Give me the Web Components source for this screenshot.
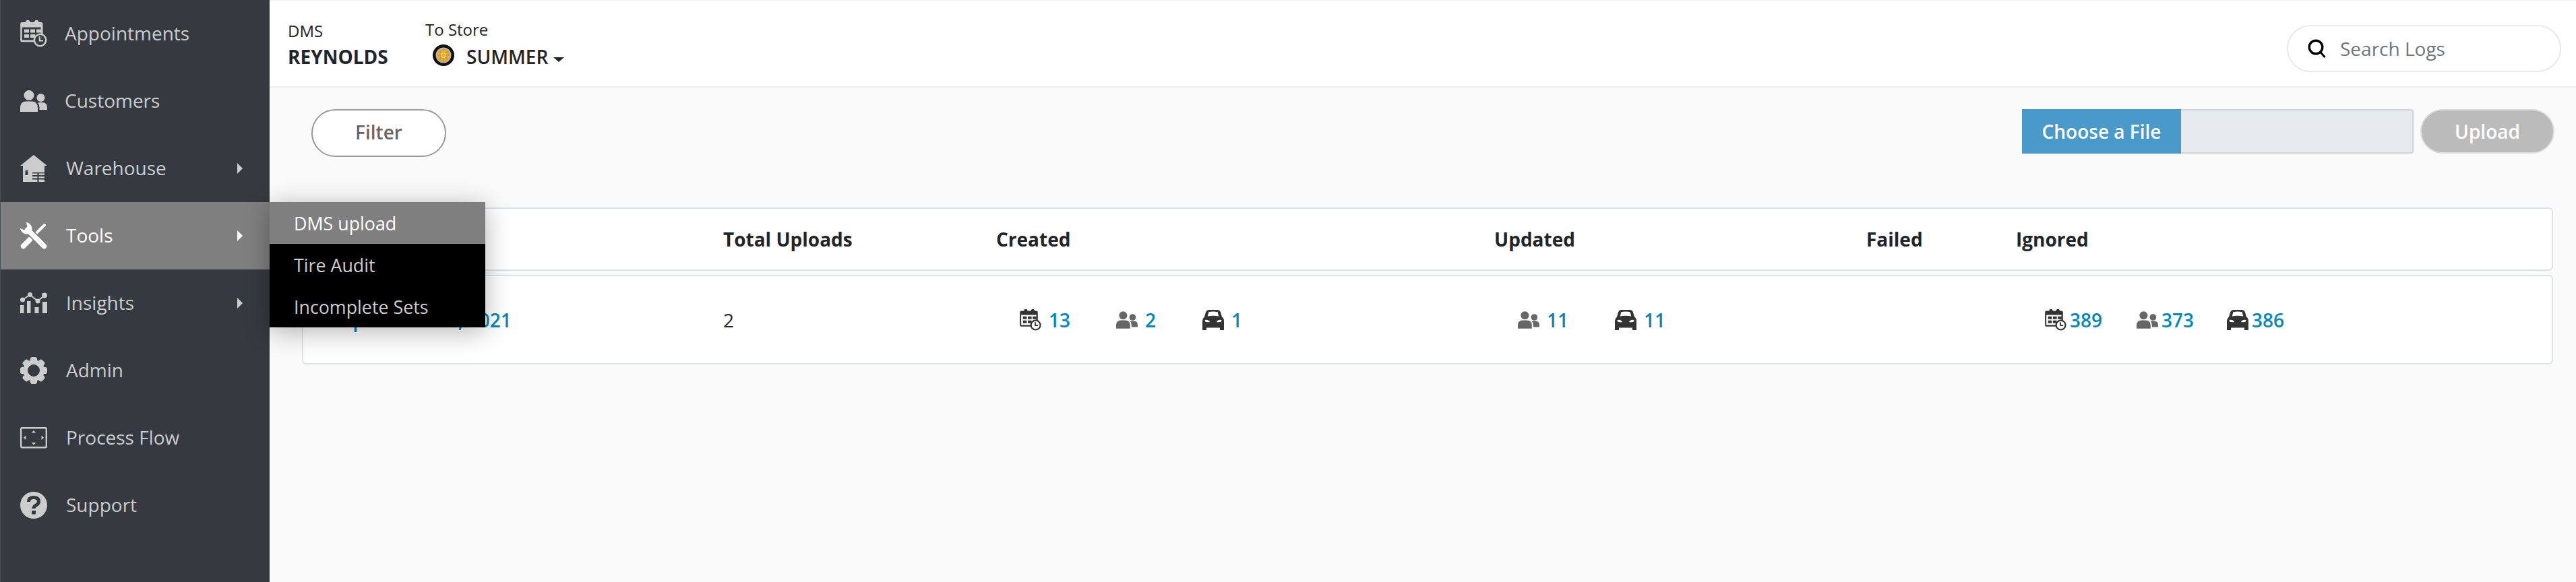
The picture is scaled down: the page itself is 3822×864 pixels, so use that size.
<!DOCTYPE html>
<html lang="en">
<head>
<meta charset="utf-8">
<title>DMS upload</title>
<style>
    html, body { margin: 0; height: 100%; background: #fafafa; }
    body { font-family: "Open Sans", "Liberation Sans", sans-serif; color: #212529; overflow: hidden; }
</style>
</head>
<body>
<app-shell>
    <side-nav slot="nav">
        <nav-item icon="calendar">Appointments</nav-item>
        <nav-item icon="people">Customers</nav-item>
        <nav-item icon="warehouse" arrow>Warehouse</nav-item>
        <nav-item icon="tools" arrow active>Tools</nav-item>
        <nav-item icon="insights" arrow>Insights</nav-item>
        <nav-item icon="gear">Admin</nav-item>
        <nav-item icon="flow">Process Flow</nav-item>
        <nav-item icon="help">Support</nav-item>
    </side-nav>
    <top-bar slot="top"></top-bar>
    <tool-bar></tool-bar>
    <log-table></log-table>
    <fly-menu slot="menu">
        <menu-link active>DMS upload</menu-link>
        <menu-link>Tire Audit</menu-link>
        <menu-link>Incomplete Sets</menu-link>
    </fly-menu>
</app-shell>

<script>
// Dibujos de los iconos, todos inline
const ICONOS = {
    calendar: `<svg viewBox="0 0 40 40"><path fill="currentColor" d="M3 3h5a3.2 3.2 0 0 1 6.500 0h6.500a3.200 3.200 0 0 1 6.500 0h3.500q2.500 0 2.500 2.500v19h-2.800v-14h-28v19h19.500v2.800h-19.500q-2.500 0-2.500-2.500v-24.300q0-2.500 2.500-2.500z"/><path fill="currentColor" d="M6 13.500h7v5h-7zM15 13.500h7v5h-7zM24 13.500h7v5h-7zM6 21h7v5h-7zM15 21h7v5h-7z"/><circle cx="29.500" cy="29.500" r="8.700" fill="var(--icon-bg, #fff)" stroke="currentColor" stroke-width="2.600"/><path fill="none" stroke="currentColor" stroke-width="2.200" d="M28.800 24v6.300h5.200"/></svg>`,
    people: `<svg viewBox="0 0 40 32"><circle cx="13" cy="7.500" r="7.500" fill="currentColor"/><path fill="currentColor" d="M0 32v-6q0-9.500 9-9.500h8q9 0 9 9.500v6z"/><circle cx="30.500" cy="11" r="6" fill="currentColor"/><path fill="currentColor" d="M28.500 29v-4q0-4-2.500-6.500 1.500-.5 3-.5h3.500q7.500 0 7.500 7.500v3.500z"/></svg>`,
    warehouse: `<svg viewBox="0 0 40 40"><path fill="currentColor" fill-rule="evenodd" d="M20 0l20 16h-4v24h-32v-24h-4zM7.500 23v7h4v-7zM18 26v14h18v-14z"/><path fill="currentColor" d="M18 27.500h7.500v2.500h-7.500zM18 32h7.500v2.500h-7.500zM18 36.500h7.500v3.500h-7.500zM27.500 27.500h8.500v2.500h-8.500zM27.500 32h8.500v2.500h-8.500zM27.500 36.500h8.500v3.500h-8.500z"/></svg>`,
    tools: `<svg viewBox="0 0 40 40"><path fill="none" stroke="currentColor" stroke-width="7.500" stroke-linecap="round" d="M4.500 35.500l10-10"/><path fill="none" stroke="currentColor" stroke-width="3.500" d="M14 26l10-10"/><path fill="none" stroke="currentColor" stroke-width="4" stroke-linecap="round" d="M25 15l11-11"/><path fill="none" stroke="var(--icon-bg, #fff)" stroke-width="11" d="M11 11l24 24"/><path fill="none" stroke="currentColor" stroke-width="7.500" stroke-linecap="round" d="M11 11l24.500 24.500"/><path fill="currentColor" d="M9 0a10 10 0 0 1 8 13l-4 4a10 10 0 0 1-13-8l6 2.500 4.500-4.500z"/></svg>`,
    insights: `<svg viewBox="0 0 40 32"><path fill="currentColor" d="M0 19h5.500v12h-5.500zM10 13h5.500v18h-5.500zM21.500 22h6v9h-6zM33 14h7v17h-7z"/><path fill="none" stroke="currentColor" stroke-width="1.800" d="M3.500 11l11-7.500 11.500 9.500 10-8.500"/><circle cx="3.500" cy="11" r="3.500" fill="currentColor"/><circle cx="14.500" cy="3.500" r="3.500" fill="currentColor"/><circle cx="26" cy="13" r="3.500" fill="currentColor"/><circle cx="36" cy="4.500" r="4" fill="currentColor"/></svg>`,
    gear: `<svg viewBox="0 0 40 40"><g fill="currentColor"><rect x="15" width="10" height="40" rx="3"/><rect x="15" width="10" height="40" rx="3" transform="rotate(45 20 20)"/><rect x="15" width="10" height="40" rx="3" transform="rotate(90 20 20)"/><rect x="15" width="10" height="40" rx="3" transform="rotate(135 20 20)"/><circle cx="20" cy="20" r="16"/></g><circle cx="20" cy="20" r="9" fill="var(--icon-bg, #fff)"/></svg>`,
    flow: `<svg viewBox="0 0 40 32"><rect x="1.200" y="1.200" width="37.600" height="29" rx="1.500" fill="none" stroke="currentColor" stroke-width="2.400"/><path fill="currentColor" d="M20 5l3.500 3.500h-7zM20 26.500l-3.500-3.500h7zM5 15.700l3.500-3.300v6.600zM35 15.700l-3.500-3.300v6.600z"/></svg>`,
    help: `<svg viewBox="0 0 40 40"><circle cx="20" cy="20" r="20" fill="currentColor"/><path fill="none" stroke="var(--icon-bg, #fff)" stroke-width="5" d="M12.500 15q0-6.500 7.500-6.500t7.500 6q0 3.500-4 5.500-3.500 1.800-3.500 5"/><rect x="17" y="28" width="6" height="5.500" rx="1" fill="var(--icon-bg, #fff)"/></svg>`,
    car: `<svg viewBox="0 0 32 30"><path fill="currentColor" fill-rule="evenodd" d="M9.500 0h13q3 0 4.500 3.500l2 7q3 2 3 5.500v14h-6v-3.500h-20v3.500h-6v-14q0-3 3-5.500l2-7q1.500-3.500 4.500-3.500zM9.500 3l-1.800 6.500q8.300-1.400 16.600 0l-1.800-6.500q-6.500-1-13 0zM3.500 16q0 2 3.500 2.200t4-.2q-1-2.800-5.500-3.200-2 0-2 1.200zM28.500 16q0-1.200-2-1.200-4.500.4-5.500 3.200.500.4 4 .2t3.500-2.200z"/></svg>`,
    search: `<svg viewBox="0 0 28 28"><circle cx="12" cy="12" r="9.800" fill="none" stroke="currentColor" stroke-width="3.400"/><path fill="none" stroke="currentColor" stroke-width="3" d="M18.500 19l7 8"/></svg>`,
    tire: `<svg viewBox="0 0 32 32"><circle cx="16" cy="16" r="16" fill="#111"/><circle cx="16" cy="16" r="11.500" fill="#b5b5b5"/><circle cx="16" cy="16" r="9.500" fill="#e9a92c"/><circle cx="16" cy="16" r="3.500" fill="none" stroke="#f7dc9a" stroke-width="1.400"/><path stroke="#c98d1c" stroke-width="1.200" d="M16 7v5M16 20v5M7 16h5M20 16h5M10 10l3 3M19 19l3 3M22 10l-3 3M13 19l-3 3"/></svg>`
};

// Icono generico: elige el dibujo por el atributo name
class UiIcon extends HTMLElement {
    constructor() {
        super();
        this.attachShadow({ mode: 'open' });
    }

    connectedCallback() {
        this.shadowRoot.innerHTML = `
        <style>
            :host { display: block; line-height: 0; flex: none; }
            svg { display: block; width: 100%; height: 100%; }
        </style>
        ${ICONOS[this.getAttribute('name')]}`;
    }
}
customElements.define('ui-icon', UiIcon);

// Contenedor general: columna lateral y zona principal
class AppShell extends HTMLElement {
    constructor() {
        super();
        this.attachShadow({ mode: 'open' });
        this.shadowRoot.innerHTML = `
        <style>
            :host { display: flex; position: relative; height: 864px; }
            .principal { flex: 1; min-width: 0; display: flex; flex-direction: column; }
            .flotante { position: absolute; left: 400px; top: 300px; }
        </style>
        <slot name="nav"></slot>
        <div class="principal">
            <slot name="top"></slot>
            <slot></slot>
        </div>
        <div class="flotante"><slot name="menu"></slot></div>`;
    }
}
customElements.define('app-shell', AppShell);

class SideNav extends HTMLElement {
    constructor() {
        super();
        this.attachShadow({ mode: 'open' });
        this.shadowRoot.innerHTML = `
        <style>
            :host {
                display: flex;
                flex-direction: column;
                flex: none;
                width: 400px;
                box-sizing: border-box;
                background: #343a40;
                border-left: 1px solid #4a4f55;
            }
        </style>
        <slot></slot>`;
    }
}
customElements.define('side-nav', SideNav);

class NavItem extends HTMLElement {
    constructor() {
        super();
        this.attachShadow({ mode: 'open' });
    }

    connectedCallback() {
        const icono = this.getAttribute('icon');
        const flecha = this.hasAttribute('arrow');
        // los iconos bajos van con alto menor que el ancho
        const alto = { people: 32, insights: 32, flow: 32 }[icono] || 40;
        const hueco = icono === 'calendar' || icono === 'people' ? 26 : 28;
        this.shadowRoot.innerHTML = `
        <style>
            :host {
                display: flex;
                align-items: center;
                box-sizing: border-box;
                height: 100px;
                padding-left: 29px;
                color: #ccc;
                font-size: 28px;
                --icon-bg: #343a40;
            }
            :host([active]) { background: #7f7f7f; color: #fff; --icon-bg: #7f7f7f; }
            ui-icon { width: 40px; height: ${alto}px; margin-right: ${hueco}px; }
            .texto { flex: 1; margin-top: -2px; }
            .flecha {
                width: 0; height: 0; margin-right: 40px;
                border-left: 8px solid currentColor;
                border-top: 8px solid transparent;
                border-bottom: 8px solid transparent;
            }
        </style>
        <ui-icon name="${icono}"></ui-icon>
        <span class="texto"><slot></slot></span>
        ${flecha ? '<span class="flecha"></span>' : ''}`;
    }
}
customElements.define('nav-item', NavItem);

class FlyMenu extends HTMLElement {
    constructor() {
        super();
        this.attachShadow({ mode: 'open' });
        this.shadowRoot.innerHTML = `
        <style>
            :host {
                display: block;
                width: 320px;
                background: #000;
                box-shadow: 0 6px 36px rgba(0, 0, 0, 0.3);
            }
        </style>
        <slot></slot>`;
    }
}
customElements.define('fly-menu', FlyMenu);

class MenuLink extends HTMLElement {
    constructor() {
        super();
        this.attachShadow({ mode: 'open' });
        this.shadowRoot.innerHTML = `
        <style>
            :host {
                display: flex;
                align-items: center;
                height: 62px;
                padding-left: 36px;
                color: #ccc;
                font-size: 26.800px;
            }
            :host([active]) { background: #7f7f7f; color: #fff; }
        </style>
        <slot></slot>`;
    }
}
customElements.define('menu-link', MenuLink);

// Barra superior con DMS, tienda y buscador
class TopBar extends HTMLElement {
    constructor() {
        super();
        this.attachShadow({ mode: 'open' });
        this.shadowRoot.innerHTML = `
        <style>
            :host {
                display: flex;
                align-items: flex-start;
                box-sizing: border-box;
                height: 130px;
                padding: 28px 22px 0 27px;
                background: #fff;
                border-top: 1px solid #f1f1f1;
                border-bottom: 2px solid #eee;
                color: #212529;
            }
            .bloque { display: flex; flex-direction: column; }
            .dms { width: 204px; margin-top: 2px; }
            .etiqueta { font-size: 24px; line-height: 30px; }
            .valor { font-size: 28px; line-height: 40px; font-weight: 700; margin-top: 3px; }
            .tienda { flex: 1; }
            .fila { display: flex; align-items: center; margin-top: 5px; padding-left: 11px; }
            .fila ui-icon { width: 32px; height: 32px; margin: 0 18px 4px 0; }
            .fila span { font-size: 28px; line-height: 40px; font-weight: 600; }
            .caret {
                width: 0; height: 0; margin: 8px 0 0 8px;
                border-top: 7px solid currentColor;
                border-left: 8px solid transparent;
                border-right: 8px solid transparent;
            }
            .buscar {
                display: flex;
                align-items: center;
                box-sizing: border-box;
                width: 407px;
                height: 70px;
                margin-top: 8px;
                padding-left: 29px;
                background: #fff;
                border: 2px solid #e9e9e9;
                border-radius: 35px;
                color: #000;
            }
            .buscar ui-icon { width: 28px; height: 28px; margin-right: 20px; }
            .buscar span { font-size: 28px; color: #6c757d; }
        </style>
        <div class="bloque dms">
            <span class="etiqueta">DMS</span>
            <span class="valor">REYNOLDS</span>
        </div>
        <div class="bloque tienda">
            <span class="etiqueta">To Store</span>
            <div class="fila">
                <ui-icon name="tire"></ui-icon>
                <span>SUMMER</span>
                <i class="caret"></i>
            </div>
        </div>
        <div class="buscar">
            <ui-icon name="search"></ui-icon>
            <span>Search Logs</span>
        </div>`;
    }
}
customElements.define('top-bar', TopBar);

// Fila de filtro y subida de archivo
class ToolBar extends HTMLElement {
    constructor() {
        super();
        this.attachShadow({ mode: 'open' });
        this.shadowRoot.innerHTML = `
        <style>
            :host {
                display: flex;
                align-items: flex-start;
                justify-content: space-between;
                padding: 32px 32px 0 62px;
                height: 178px;
                box-sizing: border-box;
                font-size: 28px;
            }
            button {
                font: inherit;
                font-weight: 600;
                box-sizing: border-box;
                padding: 0;
            }
            .filtro {
                width: 200px;
                height: 71px;
                padding-bottom: 4px;
                background: #fff;
                border: 2px solid #999;
                border-radius: 36px;
                color: #666;
            }
            .subida { display: flex; align-items: stretch; height: 66px; }
            .elegir {
                display: flex;
                align-items: center;
                justify-content: center;
                width: 236px;
                background: #4a9ac9;
                color: #fff;
                font-weight: 600;
            }
            .archivo {
                width: 345px;
                box-sizing: border-box;
                background: #e8ebee;
                border: 2px solid #cdd3db;
                border-left: 0;
                border-radius: 0 4px 4px 0;
            }
            .enviar {
                width: 199px;
                margin-left: 10px;
                background: #bbb;
                border: 2px solid #ddd;
                border-radius: 33px;
                color: #fff;
            }
        </style>
        <button class="filtro">Filter</button>
        <div class="subida">
            <div class="elegir">Choose a File</div>
            <div class="archivo"></div>
            <button class="enviar">Upload</button>
        </div>`;
    }
}
customElements.define('tool-bar', ToolBar);

// Un contador: icono mas numero en azul
class StatItem extends HTMLElement {
    constructor() {
        super();
        this.attachShadow({ mode: 'open' });
    }

    connectedCallback() {
        const icono = this.getAttribute('icon');
        const medidas = { calendar: [32, 32], people: [32, 26], car: [32, 30] }[icono];
        const color = icono === 'people' ? '#666' : '#333';
        this.shadowRoot.innerHTML = `
        <style>
            :host { display: flex; align-items: center; color: #0089b7; font-size: 28px; font-weight: 600; line-height: 34px; }
            ui-icon { width: ${medidas[0]}px; height: ${medidas[1]}px; margin-right: var(--stat-gap, 11px); color: ${color}; }
        </style>
        <ui-icon name="${icono}"></ui-icon>
        <slot></slot>`;
    }
}
customElements.define('stat-item', StatItem);

class LogTable extends HTMLElement {
    constructor() {
        super();
        this.attachShadow({ mode: 'open' });
        this.shadowRoot.innerHTML = `
        <style>
            :host {
                display: flex;
                flex-direction: column;
                gap: 6px;
                margin: 0 34px 0 48px;
                font-size: 28px;
                --icon-bg: #fff;
            }
            .fila {
                display: grid;
                grid-template-columns: 576px 405px 739px 552px 222px 1fr;
                align-items: center;
                box-sizing: border-box;
                padding-left: 47px;
                background: #fff;
                border: 2px solid #dee2e6;
                border-radius: 6px;
            }
            .cabecera { height: 94px; font-weight: 700; color: #212529; }
            .datos { height: 133px; color: #212529; }
            a { color: #0089b7; font-weight: 600; text-decoration: none; margin-left: -5px; white-space: nowrap; }
            .stats { display: grid; align-items: center; }
            .creados { grid-template-columns: 143px 128px auto; padding-left: 35px; }
            .actualizados { grid-template-columns: 144px auto; padding-left: 35px; }
            .ignorados { grid-template-columns: 136px 134px auto; padding-left: 43px; --stat-gap: 5px; }
        </style>
        <div class="fila cabecera">
            <span></span>
            <span>Total Uploads</span>
            <span>Created</span>
            <span>Updated</span>
            <span>Failed</span>
            <span>Ignored</span>
        </div>
        <div class="fila datos">
            <a href="#">September 10, 2021</a>
            <span>2</span>
            <div class="stats creados">
                <stat-item icon="calendar">13</stat-item>
                <stat-item icon="people">2</stat-item>
                <stat-item icon="car">1</stat-item>
            </div>
            <div class="stats actualizados">
                <stat-item icon="people">11</stat-item>
                <stat-item icon="car">11</stat-item>
            </div>
            <span></span>
            <div class="stats ignorados">
                <stat-item icon="calendar">389</stat-item>
                <stat-item icon="people">373</stat-item>
                <stat-item icon="car">386</stat-item>
            </div>
        </div>`;
    }
}
customElements.define('log-table', LogTable);
</script>
</body>
</html>
